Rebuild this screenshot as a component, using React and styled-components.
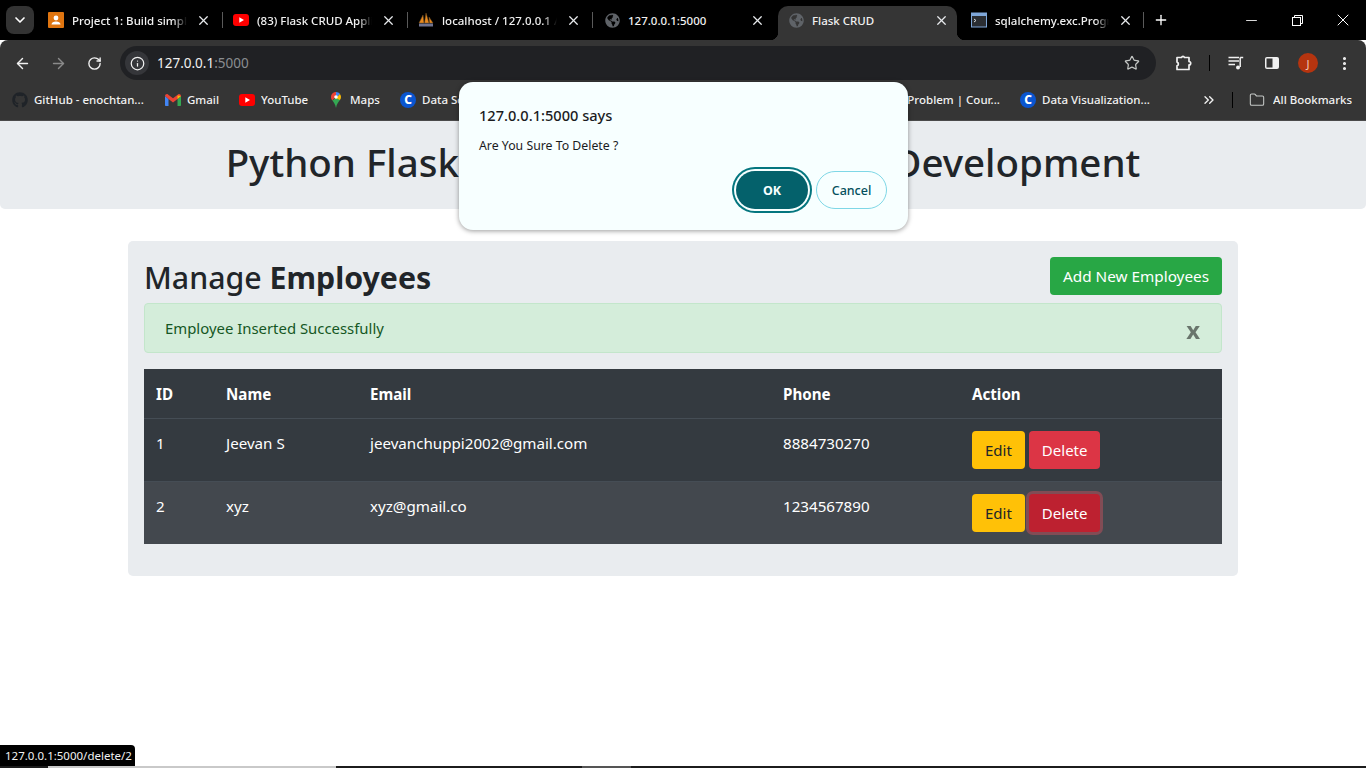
import styled, { createGlobalStyle } from "styled-components";
import {
  ArrowLeft,
  ArrowRight,
  ChevronDown,
  ChevronsRight,
  Folder,
  Info,
  Minus,
  MoreVertical,
  Plus,
  RotateCw,
  Star,
  X,
} from "lucide-react";
import { FaGithub, FaGlobeAmericas } from "react-icons/fa";

const GlobalStyle = createGlobalStyle`
  html, body {
    margin: 0;
    padding: 0;
    height: 768px;
    overflow: hidden;
    background: #fff;
    font-family: "Noto Sans", "Open Sans", sans-serif;
  }
  * { box-sizing: border-box; }
`;

const Screen = styled.div`
  position: relative;
  width: 1366px;
  height: 768px;
  display: flex;
  flex-direction: column;
  overflow: hidden;
`;

// browser tabs
const TabStrip = styled.div`
  display: flex;
  height: 40px;
  background: #000;
  padding-left: 6px;
  flex: none;
`;

const TabSearch = styled.div`
  width: 28px;
  height: 28px;
  margin: 6px 6px 0 0;
  border-radius: 8px;
  background: #333;
  color: #fff;
  display: flex;
  align-items: center;
  justify-content: center;
  flex: none;
`;

const Tab = styled.div`
  position: relative;
  width: ${(p) => p.$w}px;
  flex: none;
  display: flex;
  align-items: center;
  padding: 0 2px 0 ${(p) => p.$pad}px;
  color: #f1f1f1;
  font-size: 11.5px;
  font-weight: 500;
  ${(p) =>
    p.$active &&
    `
    background: #353535;
    border-radius: 10px 10px 0 0;
    margin-top: 6px;
    padding-bottom: 6px;
    &::before, &::after {
      content: "";
      position: absolute;
      bottom: 0;
      width: 8px;
      height: 8px;
    }
    &::before { left: -8px; background: radial-gradient(circle at 0 0, #000 8px, #353535 8.5px); }
    &::after { right: -8px; background: radial-gradient(circle at 100% 0, #000 8px, #353535 8.5px); }
  `}
`;

const TabIcon = styled.span`
  width: 16px;
  height: 16px;
  flex: none;
  display: flex;
  align-items: center;
  justify-content: center;
  color: #5f6368;
`;

const TabTitle = styled.span`
  flex: 1;
  min-width: 0;
  margin: 0 5px 0 8px;
  white-space: nowrap;
  overflow: hidden;
  ${(p) =>
    p.$fade &&
    `
    margin-right: 8px;
    -webkit-mask-image: linear-gradient(90deg, #000 88%, transparent 100%);
    mask-image: linear-gradient(90deg, #000 88%, transparent 100%);
  `}
`;

const TabClose = styled.span`
  width: 16px;
  height: 16px;
  flex: none;
  display: flex;
  align-items: center;
  justify-content: center;
  color: #e8eaed;
  margin-right: ${(p) => p.$gap}px;
`;

const TabSep = styled.span`
  width: 1px;
  height: 16px;
  background: #5a5a5a;
  flex: none;
`;

const NewTab = styled.div`
  width: 16px;
  height: 16px;
  margin: 12px 0 0 7px;
  color: #fff;
  flex: none;
  display: flex;
  align-items: center;
  justify-content: center;
`;

const WindowControls = styled.div`
  margin-left: auto;
  display: flex;
  flex: none;
`;

const WindowButton = styled.div`
  width: 46px;
  height: 40px;
  display: flex;
  align-items: center;
  justify-content: center;
  color: #fff;
`;

// address bar
const Toolbar = styled.div`
  height: 45px;
  flex: none;
  background: #353535;
  border-radius: 8px 8px 0 0;
  display: flex;
  align-items: flex-start;
  padding: 6px 4px 0;
`;

const ToolButton = styled.div`
  width: 36px;
  height: 34px;
  flex: none;
  display: flex;
  align-items: center;
  justify-content: center;
  color: ${(p) => p.$color || "#f1f1f1"};
`;

const Omnibox = styled.div`
  width: 1036px;
  height: 34px;
  margin: 0 9px 0 8px;
  flex: none;
  border-radius: 17px;
  background: #202124;
  display: flex;
  align-items: center;
  padding: 0 16px 0 5px;
  font-size: 13.5px;
  color: #f1f1f1;
`;

const InfoBadge = styled.span`
  width: 24px;
  height: 24px;
  border-radius: 50%;
  background: #35363a;
  display: flex;
  align-items: center;
  justify-content: center;
  margin-right: 8px;
  color: #f1f1f1;
`;

const UrlPort = styled.span`
  color: #8a8d91;
`;

const OmniStar = styled.span`
  margin-left: auto;
  display: flex;
  color: #c4c7c5;
`;

const ToolSep = styled.span`
  width: 1px;
  height: 16px;
  background: #000;
  margin: 9px 8px 0;
  flex: none;
`;

const Avatar = styled.span`
  width: 20px;
  height: 20px;
  border-radius: 50%;
  background: #b5340f;
  color: #f3c9b8;
  font-size: 11px;
  display: flex;
  align-items: center;
  justify-content: center;
`;

// bookmarks
const BookmarkBar = styled.div`
  height: 36px;
  flex: none;
  background: #353535;
  border-bottom: 1px solid #4a4a4a;
  display: flex;
  align-items: center;
  padding: 0 14px 6px 12px;
  gap: 20px;
`;

const Bookmark = styled.div`
  display: flex;
  align-items: center;
  gap: ${(p) => p.$gap || 6}px;
  color: #f1f1f1;
  font-size: 11.5px;
  font-weight: 500;
  flex: none;
`;

const BookmarkLabel = styled.span`
  width: ${(p) => p.$w}px;
  white-space: nowrap;
  overflow: hidden;
  text-align: ${(p) => p.$align || "left"};
`;

const BookmarkEnd = styled.div`
  margin-left: auto;
  display: flex;
  align-items: center;
  color: #f1f1f1;
`;

const BookmarkSep = styled.span`
  width: 1px;
  height: 16px;
  background: #000;
  margin: 0 16px 0 15px;
`;

const CourseraDot = styled.span`
  width: 16px;
  height: 16px;
  border-radius: 50%;
  background: #0a55d0;
  color: #fff;
  font-size: 12px;
  font-weight: 800;
  line-height: 16px;
  text-align: center;
  flex: none;
`;

// the Flask page
const Page = styled.main`
  flex: 1;
  min-height: 0;
  background: #fff;
  color: #212529;
`;

const Jumbotron = styled.header`
  height: 88px;
  padding-bottom: 6px;
  background: #e9ecef;
  border-radius: 0 0 5px 5px;
  display: flex;
  align-items: center;
  justify-content: center;
`;

const Title = styled.h1`
  margin: 0;
  font-size: 38.5px;
  font-weight: 500;
  line-height: 1.2;
`;

const Card = styled.section`
  width: 1110px;
  margin: 32px auto 0;
  padding: 16px;
  background: #e9ecef;
  border-radius: 5px;
`;

const CardHead = styled.div`
  display: flex;
  justify-content: space-between;
  align-items: flex-start;
  height: 46px;
`;

const Heading = styled.h2`
  margin: 0;
  font-size: 30.3px;
  font-weight: 500;
  line-height: 1.2;
  padding-top: 3px;

  b {
    font-weight: 700;
  }
`;

const Button = styled.button`
  height: 38px;
  padding: 1px 12px 0;
  border: 1px solid transparent;
  border-radius: 4px;
  font: inherit;
  font-size: ${(p) => (p.$kind === "add" ? 15.3 : 15)}px;
  line-height: 1;
  color: ${(p) => (p.$kind === "edit" ? "#212529" : "#fff")};
  background: ${(p) =>
    ({ add: "#28a745", edit: "#ffc107", del: "#dc3545", focus: "#bd2130" })[p.$kind]};
  box-shadow: ${(p) => (p.$kind === "focus" ? "0 0 0 3px rgba(225, 83, 97, 0.4)" : "none")};
`;

const Alert = styled.div`
  height: 50px;
  margin-bottom: 16px;
  background: #d4edda;
  border: 1px solid #c3e6cb;
  border-radius: 4px;
  color: #155724;
  font-size: 14.9px;
  display: flex;
  justify-content: space-between;
  padding: 12px 21px 12px 20px;
  line-height: 25px;
`;

const AlertClose = styled.span`
  font-size: 24px;
  font-weight: 700;
  color: #000;
  opacity: 0.5;
  line-height: 1;
  margin-top: 2px;
`;

const Table = styled.table`
  width: 1078px;
  margin-bottom: 16px;
  table-layout: fixed;
  border-collapse: separate;
  border-spacing: 0;
  color: #fff;
  background: #343a40;
  font-size: 15.15px;
  line-height: 24px;
`;

const Th = styled.th`
  width: ${(p) => p.$w}px;
  padding: 13px 12px 12px;
  text-align: left;
  font-weight: 700;
  height: 49px;
`;

const Row = styled.tr`
  background: ${(p) => (p.$alt ? "#43484e" : "#343a40")};
`;

const Td = styled.td`
  padding: 12px;
  vertical-align: top;
  height: 63px;
  border-top: 1px solid #454d55;
`;

const Actions = styled.div`
  display: flex;
  gap: 4px;
`;

// chrome's alert dialog
const Dialog = styled.div`
  position: absolute;
  left: 459px;
  top: 82px;
  width: 449px;
  height: 148px;
  background: #f7ffff;
  border-radius: 14px;
  box-shadow: 0 1px 5px rgba(0, 0, 0, 0.4);
  padding: 22px 21px 20px 20px;
  color: #1b1c1e;
`;

const DialogTitle = styled.div`
  font-size: 14.6px;
  font-weight: 500;
  line-height: 22px;
`;

const DialogText = styled.div`
  font-size: 12.3px;
  line-height: 16px;
  margin-top: 12px;
`;

const DialogButtons = styled.div`
  display: flex;
  justify-content: flex-end;
  gap: 8px;
  margin-top: 17px;
`;

const OkButton = styled.button`
  width: 72px;
  height: 38px;
  border-radius: 19px;
  border: none;
  background: #04616b;
  color: #f7ffff;
  font: inherit;
  font-size: 12.5px;
  font-weight: 700;
  box-shadow: 0 0 0 2px #f7ffff, 0 0 0 4px #04767f;
`;

const CancelButton = styled.button`
  width: 71px;
  height: 38px;
  border-radius: 19px;
  border: 1px solid #7ed7e6;
  background: transparent;
  color: #04505c;
  font: inherit;
  font-size: 12.5px;
  font-weight: 500;
`;

// link preview + sliver of the taskbar
const StatusBubble = styled.div`
  position: absolute;
  left: 0;
  bottom: 2px;
  width: 135px;
  height: 21px;
  padding: 0 5px;
  background: #000;
  color: #f1f1f1;
  font-size: 11.5px;
  white-space: nowrap;
  line-height: 21px;
  border-radius: 0 4px 0 0;
`;

const Taskbar = styled.div`
  height: 2px;
  flex: none;
  display: flex;
  background: #1c1c1c;
`;

const TaskbarPiece = styled.span`
  width: ${(p) => p.$w}px;
  background: ${(p) => p.$color};
  flex: none;
`;

const TermIcon = () => (
  <svg width="16" height="16" viewBox="0 0 16 16">
    <rect x="0.5" y="1" width="15" height="14" fill="#2a2d32" stroke="#7ea6d8" />
    <rect x="0.5" y="1" width="15" height="3" fill="#7ea6d8" />
    <path d="M3 7l2 1.5L3 10" stroke="#ddd" fill="none" />
  </svg>
);

const ClassroomIcon = () => (
  <svg width="16" height="16" viewBox="0 0 16 16">
    <rect width="16" height="16" rx="1" fill="#df7510" />
    <circle cx="8" cy="6" r="2.4" fill="#fff" />
    <path d="M3.5 12.5c0-2 2-3 4.5-3s4.5 1 4.5 3z" fill="#fff" />
  </svg>
);

const YoutubeIcon = () => (
  <svg width="16" height="12" viewBox="0 0 16 12">
    <rect width="16" height="12" rx="3" fill="#f00" />
    <path d="M6.3 3.2v5.6L11 6z" fill="#fff" />
  </svg>
);

const PmaIcon = () => (
  <svg width="16" height="16" viewBox="0 0 16 16">
    <path d="M1 11L5 3l1 8zM6.5 11L8 1l3 10zM11.5 11L11 5l4 6z" fill="#e98a1f" stroke="#6b4a20" strokeWidth="0.5" />
    <rect x="1" y="11.5" width="14" height="3" fill="#6f7390" />
  </svg>
);

const GmailIcon = () => (
  <svg width="16" height="12" viewBox="0 0 16 12">
    <path d="M0 2v9c0 .6.4 1 1 1h2.5V5z" fill="#4285f4" />
    <path d="M12.5 5v7H15c.6 0 1-.4 1-1V2z" fill="#34a853" />
    <path d="M3.5 5L0 2c0-1.6 1.8-2.5 3-1.6L8 4.2l5-3.8C14.2-.5 16 .4 16 2l-3.5 3L8 8.4z" fill="#ea4335" />
    <path d="M12.5 1.5L16 2l-3.5 3z" fill="#fbbc04" />
  </svg>
);

const MapsIcon = () => (
  <svg width="16" height="16" viewBox="0 0 16 16">
    <path d="M8 0C5.2 0 3 2.2 3 5c0 1.4.6 2.5 1.3 3.5L8 4.6z" fill="#ea4335" />
    <path d="M8 0c1.6 0 3 .7 3.9 1.9L8 6z" fill="#4285f4" />
    <path d="M11.9 1.9C12.6 2.8 13 3.8 13 5c0 1.2-.5 2.2-1.1 3.1L6 8z" fill="#fbbc04" />
    <path d="M4.3 8.5C5.6 10.3 7.4 12 8 16c.6-4 2.6-5.8 3.9-7.9L8 6z" fill="#34a853" />
    <circle cx="8" cy="5" r="1.8" fill="#fff" />
  </svg>
);

const PanelIcon = () => (
  <svg width="16" height="16" viewBox="0 0 16 16">
    <rect x="1" y="2" width="14" height="12" rx="2" fill="#f1f1f1" />
    <rect x="2.5" y="3.5" width="6" height="9" fill="#353535" />
  </svg>
);

const RestoreIcon = () => (
  <svg width="11" height="11" viewBox="0 0 11 11" fill="none" stroke="#fff">
    <rect x="0.5" y="2.5" width="8" height="8" />
    <path d="M2.5 2.5v-2h8v8h-2" />
  </svg>
);

const ExtensionIcon = () => (
  <svg width="18" height="18" viewBox="0 0 18 18" fill="none" stroke="#f1f1f1" strokeWidth="1.7" strokeLinejoin="round">
    <path d="M3 3.5h4.5a1.6 1.6 0 0 1 3 0H15v4a1.7 1.7 0 0 1 0 3.4V15.500H3v-3.600a2 2 0 0 0 0-3.800z" />
  </svg>
);

const MediaIcon = () => (
  <svg width="16" height="16" viewBox="0 0 16 16" fill="none" stroke="#f1f1f1" strokeWidth="1.5">
    <path d="M0.500 2.500H11M0.500 6H11M0.500 9.500H7" />
    <path d="M12.200 2.500h3M12.200 2.500v9.500" />
    <circle cx="10" cy="12.500" r="2" fill="#f1f1f1" stroke="none" />
  </svg>
);

const tabs = [
  { icon: <ClassroomIcon />, title: "Project 1: Build simple Flask", w: 185, pad: 8, fade: true, sep: true },
  { icon: <YoutubeIcon />, title: "(83) Flask CRUD Application", w: 185, pad: 8, fade: true, sep: true },
  { icon: <PmaIcon />, title: "localhost / 127.0.0.1 / flask", w: 185, pad: 8, fade: true, sep: true },
  { icon: <FaGlobeAmericas size={15} />, title: "127.0.0.1:5000", w: 183, pad: 9, gap: 11 },
  { icon: <FaGlobeAmericas size={15} />, title: "Flask CRUD", w: 179, pad: 10, active: true, gap: 6 },
  { icon: <TermIcon />, title: "sqlalchemy.exc.ProgrammingError", w: 189, pad: 14, fade: true, sep: true, gap: 10 },
];

const bookmarks = [
  { icon: <FaGithub size={16} color="#1f2328" />, label: "GitHub - enochtan...", w: 111 },
  { icon: <GmailIcon />, label: "Gmail", w: 32 },
  { icon: <YoutubeIcon />, label: "YouTube", w: 47 },
  { icon: <MapsIcon />, label: "Maps", w: 30 },
  { icon: <CourseraDot>C</CourseraDot>, label: "Data Science Fun...", w: 108 },
  { icon: <CourseraDot>C</CourseraDot>, label: "Python Project...", w: 130 },
  { icon: <CourseraDot>C</CourseraDot>, label: "Problem | Cour...", w: 256, align: "right" },
  { icon: <CourseraDot>C</CourseraDot>, label: "Data Visualization...", w: 108 },
];

const employees = [
  { id: 1, name: "Jeevan S", email: "jeevanchuppi2002@gmail.com", phone: "8884730270" },
  { id: 2, name: "xyz", email: "xyz@gmail.co", phone: "1234567890", alt: true },
];

export default function App() {
  return (
    <Screen>
      <GlobalStyle />
      <TabStrip>
        <TabSearch>
          <ChevronDown size={16} strokeWidth={2.5} />
        </TabSearch>
        {tabs.map((t) => (
          <Tab key={t.title} $w={t.w} $pad={t.pad} $active={t.active}>
            <TabIcon>{t.icon}</TabIcon>
            <TabTitle $fade={t.fade}>{t.title}</TabTitle>
            <TabClose $gap={t.gap || 11}>
              <X size={15} strokeWidth={2} />
            </TabClose>
            {t.sep && <TabSep />}
          </Tab>
        ))}
        <NewTab>
          <Plus size={16} strokeWidth={2} />
        </NewTab>
        <WindowControls>
          <WindowButton>
            <Minus size={17} strokeWidth={1.2} />
          </WindowButton>
          <WindowButton>
            <RestoreIcon />
          </WindowButton>
          <WindowButton>
            <X size={20} strokeWidth={1.2} />
          </WindowButton>
        </WindowControls>
      </TabStrip>

      <Toolbar>
        <ToolButton>
          <ArrowLeft size={17} strokeWidth={2} />
        </ToolButton>
        <ToolButton $color="#8a8a8a">
          <ArrowRight size={17} strokeWidth={2} />
        </ToolButton>
        <ToolButton>
          <RotateCw size={15} strokeWidth={2.2} />
        </ToolButton>
        <Omnibox>
          <InfoBadge>
            <Info size={15} strokeWidth={2} />
          </InfoBadge>
          127.0.0.1
          <UrlPort>:5000</UrlPort>
          <OmniStar>
            <Star size={16} strokeWidth={1.8} />
          </OmniStar>
        </Omnibox>
        <ToolButton>
          <ExtensionIcon />
        </ToolButton>
        <ToolSep />
        <ToolButton>
          <MediaIcon />
        </ToolButton>
        <ToolButton>
          <PanelIcon />
        </ToolButton>
        <ToolButton>
          <Avatar>J</Avatar>
        </ToolButton>
        <ToolButton>
          <MoreVertical size={17} strokeWidth={2.4} />
        </ToolButton>
      </Toolbar>

      <BookmarkBar>
        {bookmarks.map((b) => (
          <Bookmark key={b.label}>
            {b.icon}
            <BookmarkLabel $w={b.w} $align={b.align}>
              {b.label}
            </BookmarkLabel>
          </Bookmark>
        ))}
        <BookmarkEnd>
          <ChevronsRight size={16} strokeWidth={2} />
          <BookmarkSep />
          <Bookmark $gap={8}>
            <Folder size={16} color="#c4c7c5" strokeWidth={1.6} />
            <BookmarkLabel $w={79}>All Bookmarks</BookmarkLabel>
          </Bookmark>
        </BookmarkEnd>
      </BookmarkBar>

      <Page>
        <Jumbotron>
          <Title>Python Flask CRUD Web Application Development</Title>
        </Jumbotron>
        <Card>
          <CardHead>
            <Heading>
              Manage <b>Employees</b>
            </Heading>
            <Button $kind="add">Add New Employees</Button>
          </CardHead>
          <Alert>
            Employee Inserted Successfully
            <AlertClose>x</AlertClose>
          </Alert>
          <Table>
            <thead>
              <tr>
                <Th $w={70}>ID</Th>
                <Th $w={144}>Name</Th>
                <Th $w={413}>Email</Th>
                <Th $w={189}>Phone</Th>
                <Th $w={262}>Action</Th>
              </tr>
            </thead>
            <tbody>
              {employees.map((e) => (
                <Row key={e.id} $alt={e.alt}>
                  <Td>{e.id}</Td>
                  <Td>{e.name}</Td>
                  <Td>{e.email}</Td>
                  <Td>{e.phone}</Td>
                  <Td>
                    <Actions>
                      <Button $kind="edit">Edit</Button>
                      <Button $kind={e.alt ? "focus" : "del"}>Delete</Button>
                    </Actions>
                  </Td>
                </Row>
              ))}
            </tbody>
          </Table>
        </Card>
      </Page>

      <Taskbar>
        <TaskbarPiece $w={48} $color="#1c1c1c" />
        <TaskbarPiece $w={288} $color="#c9c9c9" />
        <TaskbarPiece $w={246} $color="#1c1c1c" />
        <TaskbarPiece $w={49} $color="#555" />
      </Taskbar>

      <StatusBubble>127.0.0.1:5000/delete/2</StatusBubble>

      <Dialog>
        <DialogTitle>127.0.0.1:5000 says</DialogTitle>
        <DialogText>Are You Sure To Delete ?</DialogText>
        <DialogButtons>
          <OkButton>OK</OkButton>
          <CancelButton>Cancel</CancelButton>
        </DialogButtons>
      </Dialog>
    </Screen>
  );
}
